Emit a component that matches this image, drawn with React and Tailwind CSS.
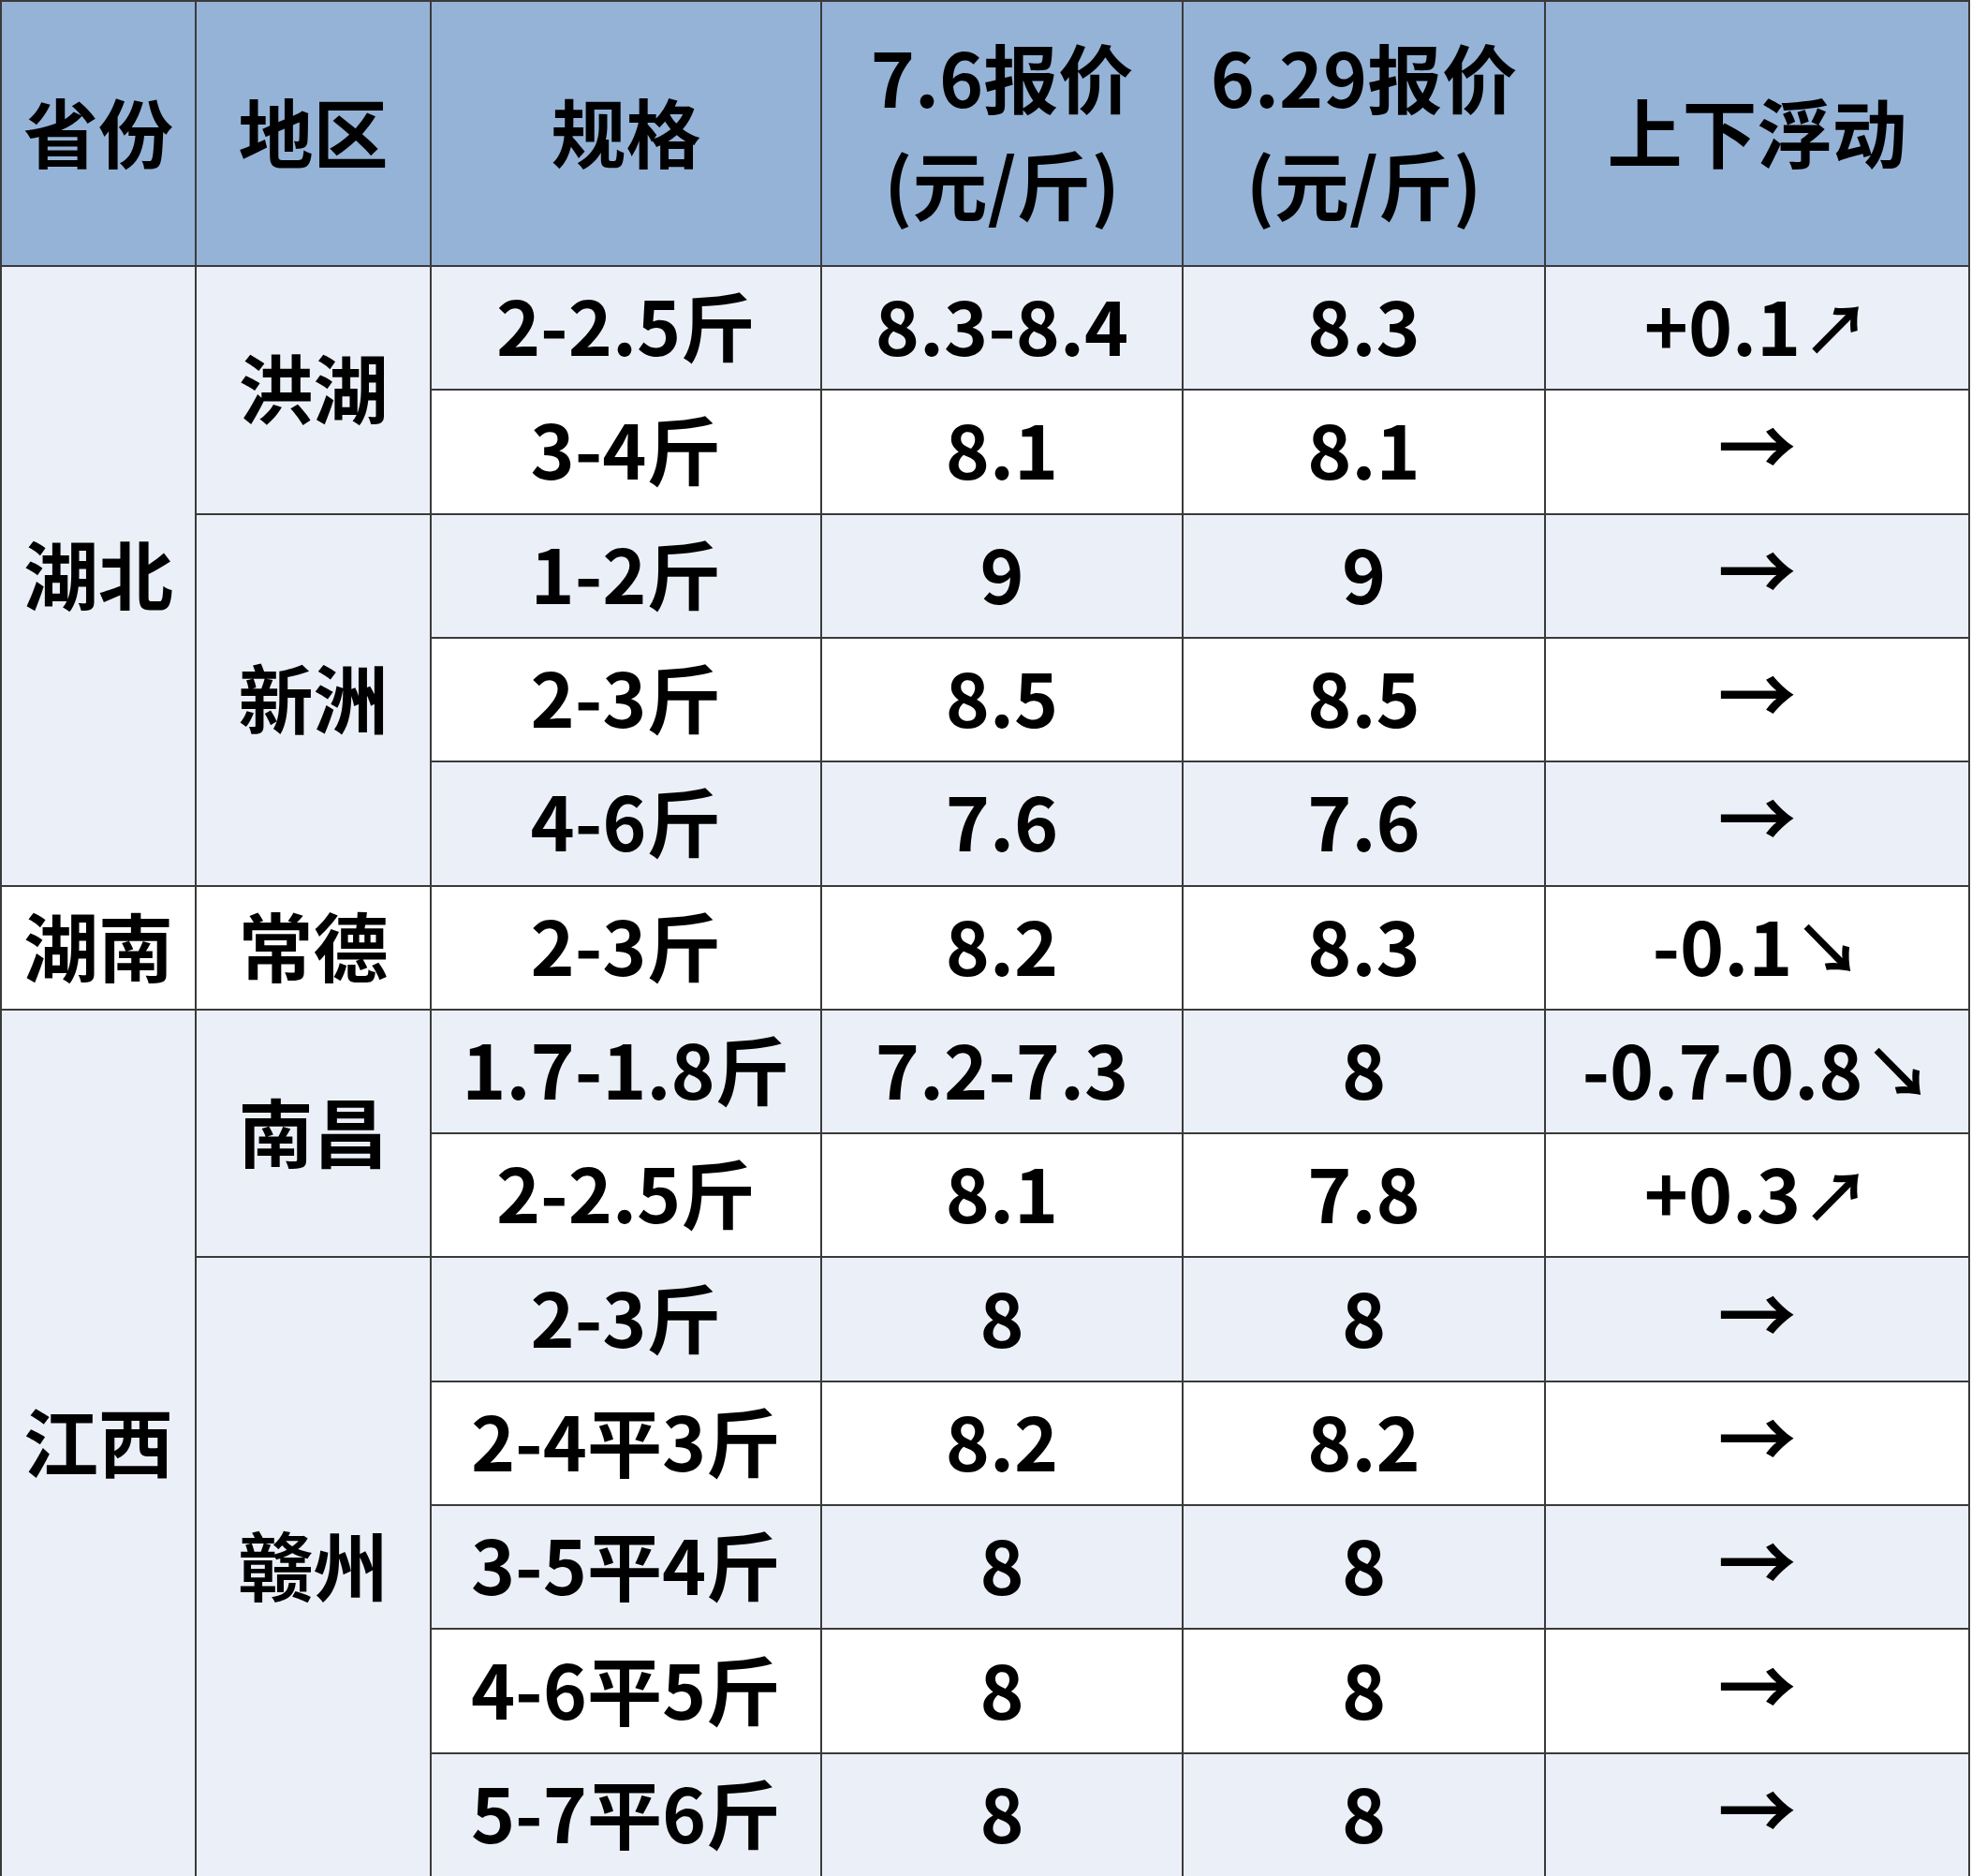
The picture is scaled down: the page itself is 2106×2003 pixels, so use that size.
import React from "react";

const font = { fontFamily: '"Microsoft YaHei", "Noto Sans CJK SC", "Noto Sans", sans-serif' };

const rows = [
  ["2-2.5斤", "8.3-8.4", "8.3", "+0.1↗"],
  ["3-4斤", "8.1", "8.1", "→"],
  ["1-2斤", "9", "9", "→"],
  ["2-3斤", "8.5", "8.5", "→"],
  ["4-6斤", "7.6", "7.6", "→"],
  ["2-3斤", "8.2", "8.3", "-0.1↘"],
  ["1.7-1.8斤", "7.2-7.3", "8", "-0.7-0.8↘"],
  ["2-2.5斤", "8.1", "7.8", "+0.3↗"],
  ["2-3斤", "8", "8", "→"],
  ["2-4平3斤", "8.2", "8.2", "→"],
  ["3-5平4斤", "8", "8", "→"],
  ["4-6平5斤", "8", "8", "→"],
  ["5-7平6斤", "8", "8", "→"],
];

const rowStart = [
  "row-start-2", "row-start-3", "row-start-4", "row-start-5", "row-start-6", "row-start-7",
  "row-start-8", "row-start-9", "row-start-10", "row-start-11", "row-start-12", "row-start-13", "row-start-14",
];

const arrowFont = { fontFamily: '"Noto Sans CJK SC", "DejaVu Sans", sans-serif' };

function Cell({ className = "", children }) {
  return (
    <div className={"flex items-center justify-center text-center text-black font-bold pb-[10px] " + className}>
      {children}
    </div>
  );
}

function Change({ v }) {
  if (v === "→") {
    return <span className="font-bold text-[84px] leading-none relative -top-[4px]" style={arrowFont}>→</span>;
  }
  const arrow = v.slice(-1);
  const num = v.slice(0, -1);
  return (
    <span className="flex items-center">
      <span>{num}</span>
      <span className="ml-[2px] text-[72px] leading-none font-bold relative top-[2px]" style={arrowFont}>{arrow}</span>
    </span>
  );
}

export default function App() {
  return (
    <div className="w-[2106px] h-[2003px] bg-white overflow-hidden" style={font}>
      <div
        className="grid w-[2104px] h-[2003px] bg-[#3a3a3a] gap-[2px] pt-[2px] px-[2px] text-[80px] leading-[1.4]"
        style={{
          gridTemplateColumns: "206px 249px 415px 384px 385px 1fr",
          gridTemplateRows: "281px repeat(13, 1fr)",
        }}
      >
        <Cell className="bg-[#95b3d7] col-start-1 row-start-1">省份</Cell>
        <Cell className="bg-[#95b3d7] col-start-2 row-start-1">地区</Cell>
        <Cell className="bg-[#95b3d7] col-start-3 row-start-1">规格</Cell>
        <Cell className="bg-[#95b3d7] col-start-4 row-start-1 flex-col leading-[1.42]">
          <span>7.6报价</span>
          <span>(元/斤)</span>
        </Cell>
        <Cell className="bg-[#95b3d7] col-start-5 row-start-1 flex-col leading-[1.42]">
          <span>6.29报价</span>
          <span>(元/斤)</span>
        </Cell>
        <Cell className="bg-[#95b3d7] col-start-6 row-start-1">上下浮动</Cell>

        <Cell className="bg-[#ebf0f8] col-start-1 row-start-2 row-span-5">湖北</Cell>
        <Cell className="bg-white col-start-1 row-start-7">湖南</Cell>
        <Cell className="bg-[#ebf0f8] col-start-1 row-start-8 row-span-7">江西</Cell>

        <Cell className="bg-[#ebf0f8] col-start-2 row-start-2 row-span-2">洪湖</Cell>
        <Cell className="bg-[#ebf0f8] col-start-2 row-start-4 row-span-3">新洲</Cell>
        <Cell className="bg-white col-start-2 row-start-7">常德</Cell>
        <Cell className="bg-[#ebf0f8] col-start-2 row-start-8 row-span-2">南昌</Cell>
        <Cell className="bg-[#ebf0f8] col-start-2 row-start-10 row-span-5">赣州</Cell>

        {rows.map((r, i) => {
          const bg = i % 2 === 0 ? "bg-[#ebf0f8]" : "bg-white";
          return (
            <React.Fragment key={i}>
              <Cell className={bg + " col-start-3 " + rowStart[i]}>{r[0]}</Cell>
              <Cell className={bg + " col-start-4 " + rowStart[i]}>{r[1]}</Cell>
              <Cell className={bg + " col-start-5 " + rowStart[i]}>{r[2]}</Cell>
              <Cell className={bg + " col-start-6 " + rowStart[i]}>
                <Change v={r[3]} />
              </Cell>
            </React.Fragment>
          );
        })}
      </div>
    </div>
  );
}
